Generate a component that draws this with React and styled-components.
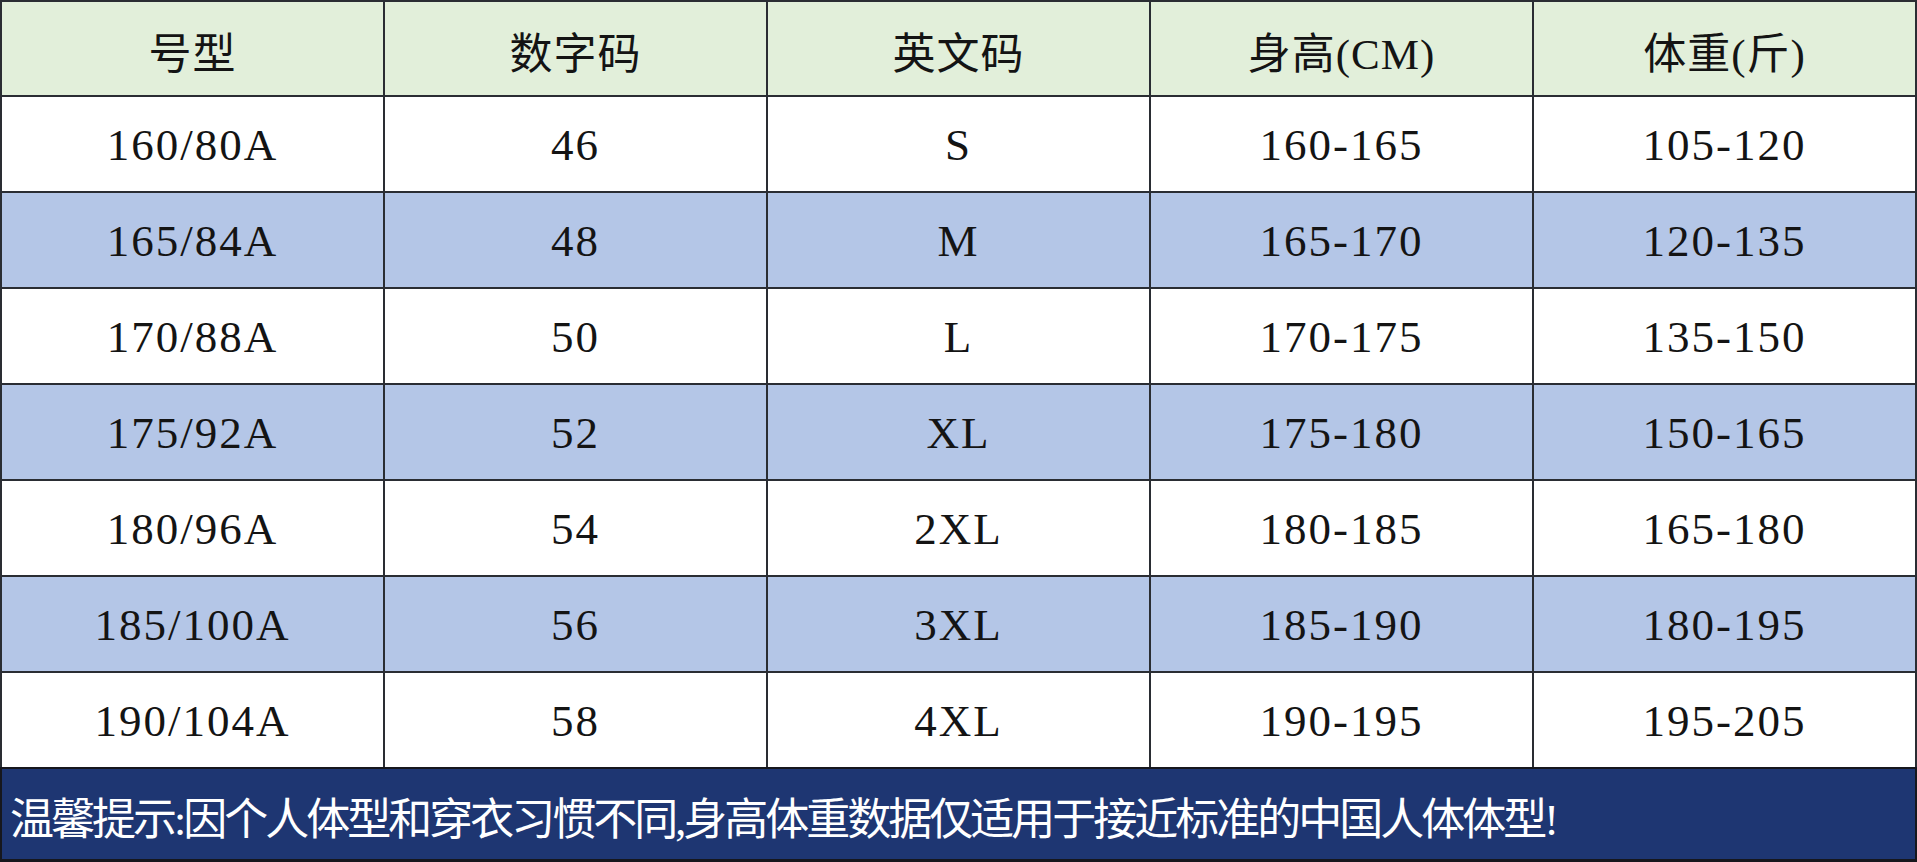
import React from "react";
import styled, { createGlobalStyle } from "styled-components";

const Global = createGlobalStyle`
  html, body { margin: 0; padding: 0; background: #ffffff; }
  body { width: 1917px; height: 862px; overflow: hidden; }
  #root { width: 1917px; height: 862px; }
`;

const Page = styled.div`
  width: 1917px;
  height: 862px;
  display: flex;
  flex-direction: column;
  font-family: "Liberation Serif", "Noto Sans CJK SC", serif;
  color: #141414;
`;

const Table = styled.div`
  display: grid;
  grid-template-columns: repeat(5, 1fr);
  grid-template-rows: 93px repeat(7, 94px);
  gap: 2px;
  padding: 2px 2px 0 2px;
  background: #2a2d33;
`;

const HeadCell = styled.div`
  background: #e2efda;
  display: flex;
  align-items: center;
  justify-content: center;
  font-size: 43px;
  font-weight: 400;
  letter-spacing: 1px;
  padding-top: 2px;
`;

const Cell = styled.div`
  background: ${(p) => (p.$shaded ? "#b4c6e7" : "#ffffff")};
  display: flex;
  align-items: center;
  justify-content: center;
  font-size: 45px;
  letter-spacing: 2px;
  padding-top: 2px;
`;

const Footer = styled.div`
  box-sizing: border-box;
  height: 95px;
  background: #1e3672;
  border: 2px solid #16171d;
  border-bottom-width: 3px;
  display: flex;
  align-items: center;
  padding: 4px 0 0 8px;
  color: #ffffff;
  font-size: 44px;
  letter-spacing: -3px;
  white-space: nowrap;
`;

const headers = ["号型", "数字码", "英文码", "身高(CM)", "体重(斤)"];

const rows = [
  ["160/80A", "46", "S", "160-165", "105-120"],
  ["165/84A", "48", "M", "165-170", "120-135"],
  ["170/88A", "50", "L", "170-175", "135-150"],
  ["175/92A", "52", "XL", "175-180", "150-165"],
  ["180/96A", "54", "2XL", "180-185", "165-180"],
  ["185/100A", "56", "3XL", "185-190", "180-195"],
  ["190/104A", "58", "4XL", "190-195", "195-205"],
];

export default function App() {
  return (
    <Page>
      <Global />
      <Table>
        {headers.map((h) => (
          <HeadCell key={h}>{h}</HeadCell>
        ))}
        {rows.map((r, i) =>
          r.map((v, j) => (
            <Cell key={i + "-" + j} $shaded={i % 2 === 1}>
              {v}
            </Cell>
          ))
        )}
      </Table>
      <Footer>
        温馨提示:因个人体型和穿衣习惯不同,身高体重数据仅适用于接近标准的中国人体体型!
      </Footer>
    </Page>
  );
}
